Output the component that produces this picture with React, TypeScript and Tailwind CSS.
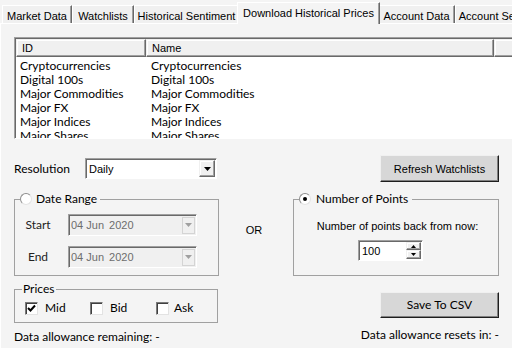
import React from 'react';

// Segoe UI stand-in and MS Sans Serif stand-in
const ui = "font-['Lato','Open_Sans',sans-serif] text-[12px] leading-[14px]";
const ms = "font-['Liberation_Sans',Arial,sans-serif] text-[11px] leading-[14px]";

const sunken = 'border border-t-[#a0a0a0] border-l-[#a0a0a0] border-b-white border-r-white shadow-[inset_1px_1px_0_#696969]';
const raised = 'border border-t-[#f0f0f0] border-l-[#f0f0f0] border-b-[#696969] border-r-[#696969] shadow-[inset_-1px_-1px_0_#a0a0a0,inset_1px_1px_0_#ffffff]';

const tabs = [
  { label: 'Market Data', w: 'w-[70px]' },
  { label: 'Watchlists', w: 'w-[62px]' },
  { label: 'Historical Sentiment', w: 'w-[105px]' },
  { label: 'Download Historical Prices', w: 'w-[143px]', active: true },
  { label: 'Account Data', w: 'w-[77px]' },
  { label: 'Account Settings', w: 'w-[90px]' },
];

const watchlists = ['Cryptocurrencies', 'Digital 100s', 'Major Commodities', 'Major FX', 'Major Indices', 'Major Shares', 'Minor Commodities'];

const Arrow = ({ dim, up }: { dim?: boolean; up?: boolean }) => (
  <svg width="7" height="4" viewBox="0 0 7 4" className={up ? 'rotate-180' : ''}>
    <path d="M0 0h7L3.5 4z" fill={dim ? '#a0a0a0' : '#000'} />
  </svg>
);

const Radio = ({ checked }: { checked?: boolean }) => (
  <span className="relative inline-flex w-[12px] h-[12px] rounded-full bg-white border border-[#8d8d8d] border-b-[#e3e3e3] border-r-[#e3e3e3] items-center justify-center shrink-0">
    {checked && <span className="w-[4px] h-[4px] rounded-full bg-black" />}
  </span>
);

const Check = ({ checked }: { checked?: boolean }) => (
  <span className="inline-flex w-[13px] h-[13px] bg-white border border-t-[#7a7a7a] border-l-[#7a7a7a] border-b-[#e3e3e3] border-r-[#e3e3e3] shadow-[inset_1px_1px_0_#404040] items-center justify-center shrink-0">
    {checked && (
      <svg width="9" height="9" viewBox="0 0 9 9">
        <path d="M1 4l2.5 2.5L8 1.5" stroke="#000" strokeWidth="2" fill="none" />
      </svg>
    )}
  </span>
);

const DisabledDate = () => (
  <div className={`w-[129px] h-[22px] bg-[#f0f0f0] ${sunken} flex items-center`}>
    <span className={`${ms} text-[#6d6d6d] pl-[2px] flex-1`}>04 Jun <span className="ml-[2px]">2020</span></span>
    <span className="w-[13px] h-[17px] mr-[1px] border border-[#d4d4d4] bg-[#f0f0f0] flex items-center justify-center">
      <Arrow dim />
    </span>
  </div>
);

export default function App() {
  return (
    <div className="w-[512px] h-[348px] overflow-hidden bg-[#f4f4f4] text-black">
      {/* Tabs */}
      <div className="h-[23px] flex items-end pl-[2px]">
        {tabs.map(t =>
          t.active ? (
            <div
              key={t.label}
              className={`${t.w} ${ms} shrink-0 relative z-10 -mx-[2px] -mb-[1px] h-[22px] bg-[#f4f4f4] border-t border-l border-t-white border-l-white border-r border-r-[#696969] shadow-[inset_-1px_0_0_#a0a0a0] flex items-start justify-center pt-[3px] whitespace-nowrap`}
            >
              {t.label}
            </div>
          ) : (
            <div
              key={t.label}
              className={`${t.w} ${ms} shrink-0 h-[18px] bg-[#f0f0f0] border-t border-l border-t-white border-l-white border-r border-r-[#696969] shadow-[inset_-1px_0_0_#a0a0a0] flex items-start justify-center pt-[3px] whitespace-nowrap overflow-hidden`}
            >
              {t.label}
            </div>
          )
        )}
      </div>

      {/* Page */}
      <div className="border-t border-l border-t-white border-l-white h-[325px]">
        {/* Watchlist list */}
        <div className={`mt-[13px] ml-[13px] w-[520px] h-[102px] bg-white ${sunken} overflow-hidden`}>
          <div className={`${ms} h-[18px] flex bg-[#f0f0f0] ml-[1px] mt-[1px]`}>
            <div className={`w-[130px] ${raised} pl-[5px] flex items-center`}>ID</div>
            <div className={`w-[348px] ${raised} pl-[5px] flex items-center`}>Name</div>
            <div className={`flex-1 ${raised}`} />
          </div>
          <div className="pt-[2px]">
            {watchlists.map(w => (
              <div key={w} className={`${ui} h-[14px] flex whitespace-nowrap`}>
                <span className="w-[131px] pl-[5px]">{w}</span>
                <span className="pl-[5px]">{w}</span>
              </div>
            ))}
          </div>
        </div>

        {/* Resolution + Refresh */}
        <div className="mt-[16px] ml-[13px] mr-[13px] h-[27px] flex items-center">
          <span className={`${ui} w-[71px]`}>Resolution</span>
          <div className={`w-[132px] h-[21px] bg-white ${sunken} flex items-center`}>
            <span className={`${ms} pl-[3px] flex-1`}>Daily</span>
            <span className={`w-[16px] h-[17px] mr-[1px] ${raised} bg-[#f0f0f0] flex items-center justify-center`}>
              <Arrow />
            </span>
          </div>
          <button className={`ml-auto w-[119px] h-[27px] bg-[#d7d7d7] ${ms} border border-t-[#f0f0f0] border-l-[#f0f0f0] border-b-[#1e1e1e] border-r-[#1e1e1e] shadow-[inset_-1px_-1px_0_#808080]`}>
            Refresh Watchlists
          </button>
        </div>

        {/* Date range / OR / number of points */}
        <div className="mt-[10px] ml-[13px] mr-[13px] flex items-start">
          <fieldset className="w-[205px] h-[84px] border border-[#a0a0a0]">
            <legend className={`${ui} ml-[5px] pr-[3px] h-[14px] flex items-center gap-[4px]`}>
              <Radio />
              <span>Date Range</span>
            </legend>
            <div className="mt-[8px] flex items-center">
              <span className={`${ui} w-[46px] text-center text-[#222]`}>Start</span>
              <span className="ml-[7px]"><DisabledDate /></span>
            </div>
            <div className="mt-[10px] flex items-center">
              <span className={`${ui} w-[46px] text-center text-[#222]`}>End</span>
              <span className="ml-[7px]"><DisabledDate /></span>
            </div>
          </fieldset>

          <div className={`${ms} flex-1 text-center pr-[4px] pt-[31px]`}>OR</div>

          <fieldset className="w-[206px] h-[84px] border border-[#a0a0a0]">
            <legend className={`${ui} ml-[5px] pr-[4px] h-[14px] flex items-center gap-[5px]`}>
              <Radio checked />
              <span>Number of Points</span>
            </legend>
            <div className={`${ms} mt-[13px] text-center pl-[3px]`}>Number of points back from now:</div>
            <div className={`mt-[7px] ml-[64px] w-[65px] h-[21px] bg-white ${sunken} flex items-center`}>
              <span className={`${ms} pl-[3px] flex-1`}>100</span>
              <span className="w-[15px] h-[17px] mr-[1px] flex flex-col">
                <span className={`h-[8px] ${raised} bg-[#f0f0f0] flex items-center justify-center`}>
                  <svg width="5" height="3" viewBox="0 0 5 3"><path d="M0 3h5L2.5 0z" fill="#000" /></svg>
                </span>
                <span className={`h-[9px] ${raised} bg-[#f0f0f0] flex items-center justify-center`}>
                  <svg width="5" height="3" viewBox="0 0 5 3"><path d="M0 0h5L2.5 3z" fill="#000" /></svg>
                </span>
              </span>
            </div>
          </fieldset>
        </div>

        {/* Prices + Save */}
        <div className="mt-[6px] ml-[13px] mr-[13px] flex items-start">
          <fieldset className="w-[204px] h-[41px] border border-[#a0a0a0]">
            <legend className={`${ui} ml-[7px] px-[1px] h-[14px]`}>Prices</legend>
            <div className={`${ui} mt-[5px] ml-[10px] flex items-center`}>
              <span className="w-[65px] flex items-center"><Check checked /><span className="ml-[7px]">Mid</span></span>
              <span className="w-[66px] flex items-center"><Check /><span className="ml-[7px]">Bid</span></span>
              <span className="flex items-center"><Check /><span className="ml-[5px]">Ask</span></span>
            </div>
          </fieldset>
          <button className={`ml-auto mt-[10px] w-[119px] h-[26px] bg-[#d7d7d7] ${ui} border border-t-[#f0f0f0] border-l-[#f0f0f0] border-b-[#1e1e1e] border-r-[#1e1e1e] shadow-[inset_-1px_-1px_0_#808080]`}>
            Save To CSV
          </button>
        </div>

        {/* Allowance */}
        <div className={`${ui} mt-[7px] ml-[13px] mr-[13px] flex items-start whitespace-nowrap`}>
          <span>Data allowance remaining: -</span>
          <span className="ml-auto -mt-[2px]">Data allowance resets in: -</span>
        </div>
      </div>
    </div>
  );
}
